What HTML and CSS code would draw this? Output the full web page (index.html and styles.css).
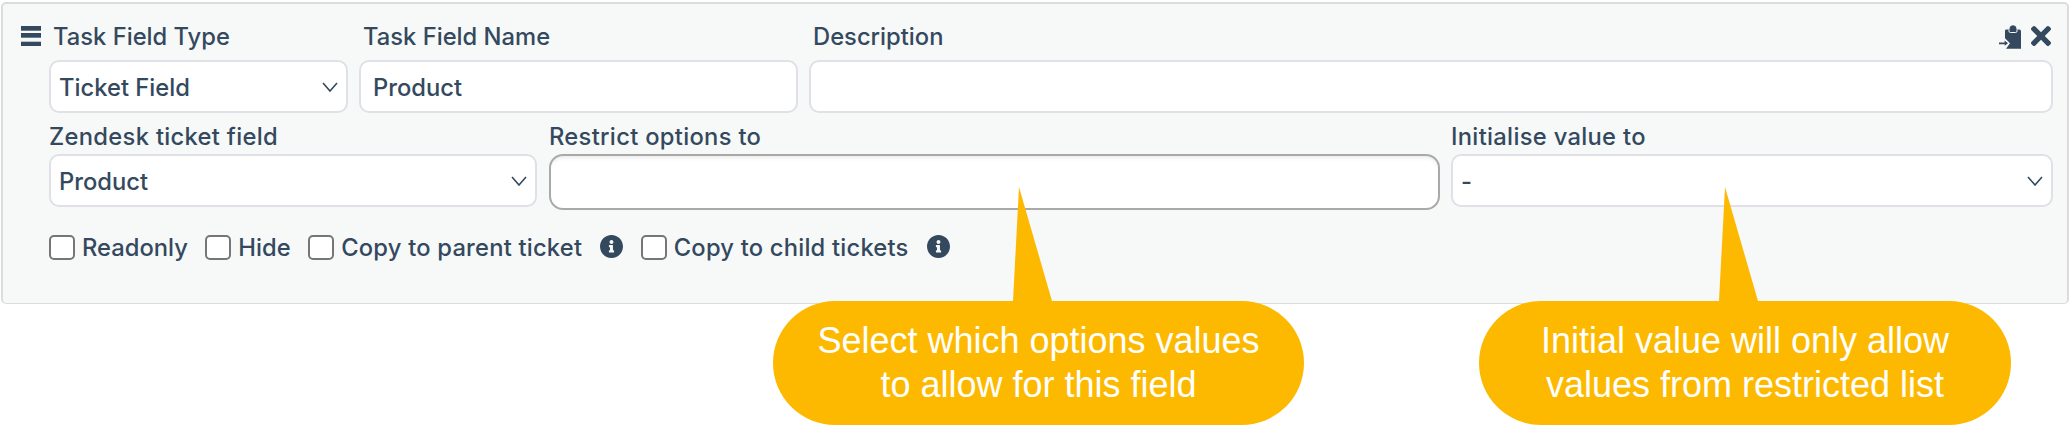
FILE: index.html
```html
<!DOCTYPE html>
<html lang="en">
<head>
    <meta charset="UTF-8">
    <title>Task field</title>
    <link rel="stylesheet" href="styles.css">
</head>
<body>
<div class="field-card">
    <!-- Drag handle -->
    <svg class="field-card__handle" viewBox="0 0 20 20">
        <rect x="0" y="0" width="20" height="4.700"/>
        <rect x="0" y="7" width="20" height="4.700"/>
        <rect x="0" y="15.700" width="20" height="4.300"/>
    </svg>

    <!-- Actions -->
    <div class="field-card__actions">
        <svg class="icon-move" viewBox="27 14 66 71">
            <path d="M49 27H58L60 19Q63 14 69 14T78 19L80 27H88Q93 27 93 32V85H48L60 68L45 53V31Q45 27 49 27Z"/>
            <path class="icon-move__notch" d="M57 27V32Q57 36 61 36H77Q81 36 81 32V27"/>
            <path d="M27 66H44V60L54 68L44 76V71H27Z"/>
        </svg>
        <svg class="icon-close" viewBox="0 80 352 352">
            <path d="M242.72 256l100.070-100.070c12.280-12.280 12.280-32.190 0-44.480l-22.240-22.240c-12.280-12.280-32.190-12.280-44.480 0L176 189.280 75.930 89.210c-12.280-12.280-32.190-12.280-44.480 0L9.210 111.450c-12.280 12.280-12.280 32.190 0 44.480L109.280 256 9.210 356.070c-12.280 12.280-12.280 32.190 0 44.480l22.240 22.240c12.280 12.280 32.200 12.280 44.480 0L176 322.720l100.070 100.070c12.280 12.280 32.200 12.280 44.480 0l22.240-22.240c12.280-12.280 12.280-32.190 0-44.480L242.720 256z"/>
        </svg>
    </div>

    <div class="row row--top">
        <div class="field">
            <label class="field__label">Task Field Type</label>
            <select class="input input--select"><option>Ticket Field</option></select>
        </div>
        <div class="field">
            <label class="field__label">Task Field Name</label>
            <input class="input" type="text" value="Product">
        </div>
        <div class="field">
            <label class="field__label">Description</label>
            <input class="input" type="text">
        </div>
    </div>

    <div class="row row--second">
        <div class="field">
            <label class="field__label text--wide">Zendesk ticket field</label>
            <select class="input input--select"><option>Product</option></select>
        </div>
        <div class="field">
            <label class="field__label text--wide">Restrict options to</label>
            <input class="input input--multi" type="text">
        </div>
        <div class="field">
            <label class="field__label text--wide">Initialise value to</label>
            <select class="input input--select"><option>-</option></select>
        </div>
    </div>

    <div class="checks">
        <label class="check"><input type="checkbox"><span>Readonly</span></label>
        <label class="check"><input type="checkbox"><span>Hide</span></label>
        <label class="check"><input type="checkbox"><span class="check__wide">Copy to parent ticket</span>
            <svg class="icon-info" viewBox="8 8 496 496"><path d="M256 8C119.043 8 8 119.083 8 256c0 136.997 111.043 248 248 248s248-111.003 248-248C504 119.083 392.957 8 256 8zm0 110c23.196 0 42 18.804 42 42s-18.804 42-42 42-42-18.804-42-42 18.804-42 42-42zm56 254c0 6.627-5.373 12-12 12h-88c-6.627 0-12-5.373-12-12v-24c0-6.627 5.373-12 12-12h12v-64h-12c-6.627 0-12-5.373-12-12v-24c0-6.627 5.373-12 12-12h64c6.627 0 12 5.373 12 12v100h12c6.627 0 12 5.373 12 12v24z"/></svg>
        </label>
        <label class="check"><input type="checkbox"><span class="check__wide">Copy to child tickets</span>
            <svg class="icon-info" viewBox="8 8 496 496"><path d="M256 8C119.043 8 8 119.083 8 256c0 136.997 111.043 248 248 248s248-111.003 248-248C504 119.083 392.957 8 256 8zm0 110c23.196 0 42 18.804 42 42s-18.804 42-42 42-42-18.804-42-42 18.804-42 42-42zm56 254c0 6.627-5.373 12-12 12h-88c-6.627 0-12-5.373-12-12v-24c0-6.627 5.373-12 12-12h12v-64h-12c-6.627 0-12-5.373-12-12v-24c0-6.627 5.373-12 12-12h64c6.627 0 12 5.373 12 12v100h12c6.627 0 12 5.373 12 12v24z"/></svg>
        </label>
    </div>
</div>

<!-- Callouts -->
<div class="callout callout--options">
    <div class="callout__tail"></div>
    <p class="callout__text">Select which options values<br>to allow for this field</p>
</div>
<div class="callout callout--initial">
    <div class="callout__tail"></div>
    <p class="callout__text">Initial value will only allow<br>values from restricted list</p>
</div>
</body>
</html>
```

FILE: styles.css
```css
:root {
    --ink: #34495e;
    --line: #dfe1e6;
    --amber: #fdb900;
}

html, body {
    height: 100%;
}

body {
    margin: 0;
    background-color: #fff;
    color: var(--ink);
    font-family: Inter, "Noto Sans", sans-serif;
    font-size: 23.75px;
    font-weight: 450;
    overflow: hidden;
    position: relative;
}

.text--wide {
    letter-spacing: 0.3px;
}

.field-card {
    box-sizing: border-box;
    background-color: #f7f9f9;
    border: 2px solid #dcdcdc;
    border-bottom-width: 1px;
    border-radius: 5px;
    height: 302px;
    margin: 2px 1px 0 1px;
    padding: 20px 14px 0 46px;
    position: relative;
}

.field-card__handle {
    fill: var(--ink);
    height: 20px;
    left: 18px;
    position: absolute;
    top: 22px;
    width: 20px;
}

.field-card__actions {
    align-items: flex-start;
    display: flex;
    gap: 10px;
    position: absolute;
    right: 16px;
    top: 21px;
}

.icon-move {
    fill: var(--ink);
    height: 24px;
    width: 22px;
}

.icon-move__notch {
    fill: none;
    stroke: #f7f9f9;
    stroke-width: 3;
}

.icon-close {
    fill: var(--ink);
    height: 20px;
    margin-top: 1px;
    width: 20px;
}

.row {
    display: grid;
}

.row--top {
    column-gap: 11px;
    grid-template-columns: 299px 439px 1fr;
}

.row--second {
    column-gap: 12px;
    grid-template-columns: 488px 890px 1fr;
    margin-top: 11px;
}

.field {
    display: flex;
    flex-direction: column;
    align-items: stretch;
}

.field__label {
    line-height: 26px;
    margin-bottom: 4px;
}

.row--top .field__label {
    margin-bottom: 10px;
    padding-left: 4px;
}

.input {
    box-sizing: border-box;
    appearance: none;
    background-color: #fff;
    border: 2px solid var(--line);
    border-radius: 10px;
    color: var(--ink);
    font-family: inherit;
    font-size: inherit;
    font-weight: inherit;
    height: 53px;
    outline: none;
    padding: 2px 12px 0;
    width: 100%;
}

.input--select {
    background-image: url("data:image/svg+xml,%3Csvg xmlns='http://www.w3.org/2000/svg' width='16' height='10'%3E%3Cpath d='M1 1l7 8 7-8' fill='none' stroke='%2334495e' stroke-width='1.6'/%3E%3C/svg%3E");
    background-position: right 8px center;
    background-repeat: no-repeat;
    padding-left: 8px;
}

.input--multi {
    border-color: #a9a9a9;
    border-radius: 14px;
    box-shadow: inset 0 4px 5px -3px rgba(0, 0, 0, 0.1);
    height: 56px;
    width: 891px;
}

.checks {
    align-items: flex-start;
    display: flex;
    gap: 17.5px;
    margin-top: 25px;
}

.check {
    align-items: flex-start;
    display: flex;
    line-height: 25px;
}

.check__wide {
    letter-spacing: 0.2px;
}

.check input {
    appearance: none;
    background-color: #fff;
    border: 2px solid #767676;
    border-radius: 5px;
    height: 25px;
    margin: 0 7px 0 0;
    width: 26px;
}

.icon-info {
    fill: var(--ink);
    height: 23px;
    margin-left: 18px;
    width: 23px;
}

.callout {
    background-color: var(--amber);
    border-radius: 62px;
    box-sizing: border-box;
    height: 124px;
    position: absolute;
    top: 301px;
}

.callout--options {
    left: 773px;
    width: 531px;
}

.callout--initial {
    left: 1479px;
    width: 532px;
}

.callout__tail {
    background-color: var(--amber);
    bottom: 100%;
    clip-path: polygon(6px 0, 100% 100%, 0 100%);
    height: 114px;
    position: absolute;
    width: 39px;
}

.callout--options .callout__tail {
    left: 240px;
}

.callout--initial .callout__tail {
    left: 240px;
}

.callout__text {
    color: #fff;
    font-family: "Liberation Sans", Arial, sans-serif;
    font-size: 36px;
    font-weight: 400;
    line-height: 44px;
    margin: 0;
    padding-top: 18px;
    text-align: center;
}
```
